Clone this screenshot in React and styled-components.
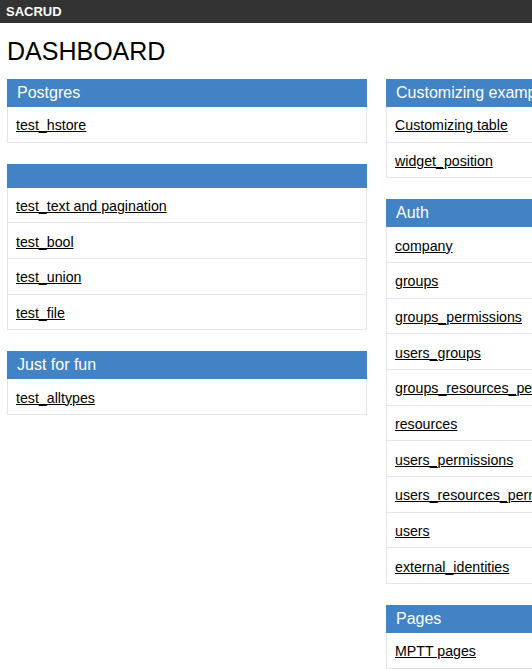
import styled, { createGlobalStyle } from 'styled-components';

const GlobalStyle = createGlobalStyle`
  html, body {
    margin: 0;
    padding: 0;
    overflow: hidden;
    background: #fff;
    font-family: "Liberation Sans", Arial, sans-serif;
  }
`;

const columns = [
  [
    { title: 'Postgres', items: ['test_hstore'] },
    { title: '', items: ['test_text and pagination', 'test_bool', 'test_union', 'test_file'] },
    { title: 'Just for fun', items: ['test_alltypes'] },
  ],
  [
    { title: 'Customizing examples', items: ['Customizing table', 'widget_position'] },
    {
      title: 'Auth',
      items: [
        'company',
        'groups',
        'groups_permissions',
        'users_groups',
        'groups_resources_permissions',
        'resources',
        'users_permissions',
        'users_resources_permissions',
        'users',
        'external_identities',
      ],
    },
    { title: 'Pages', items: ['MPTT pages'] },
  ],
];

function App() {
  return (
    <>
      <GlobalStyle />
      <TopBar>SACRUD</TopBar>
      <Main>
        <Title>DASHBOARD</Title>
        <Columns>
          {columns.map((col, i) => (
            <Column key={i}>
              {col.map((panel, j) => (
                <Panel key={j}>
                  <PanelHeader>{panel.title}</PanelHeader>
                  {panel.items.map((item) => (
                    <Row key={item}>
                      <Link href="#">{item}</Link>
                    </Row>
                  ))}
                </Panel>
              ))}
            </Column>
          ))}
        </Columns>
      </Main>
    </>
  );
}

const TopBar = styled.div`
  height: 23px;
  line-height: 23px;
  background: #333333;
  color: #fff;
  font-weight: bold;
  font-size: 13px;
  padding-left: 6px;
`;

const Main = styled.div`
  padding: 0 7px;
`;

const Title = styled.h1`
  margin: 14px 0 0;
  font-size: 25px;
  font-weight: normal;
  line-height: 28px;
  color: #000;
`;

const Columns = styled.div`
  display: flex;
  gap: 19px;
  margin-top: 14px;
  width: 739px;
`;

const Column = styled.div`
  width: 360px;
  flex: none;
  display: flex;
  flex-direction: column;
  gap: 21px;
`;

const Panel = styled.div`
  border: 1px solid #e6e6e6;
  border-top: none;
`;

const PanelHeader = styled.div`
  background: #4183c4;
  color: #fff;
  font-size: 16px;
  line-height: 18px;
  min-height: 14px;
  padding: 5px 10px;
  margin: 0 -1px;
  white-space: nowrap;
  overflow: hidden;
`;

const Row = styled.div`
  height: 32.67px;
  display: flex;
  align-items: center;
  padding: 2px 8px 0;
  font-size: 14.2px;
  white-space: nowrap;
  overflow: hidden;
  & + & {
    border-top: 1px solid #e6e6e6;
  }
`;

const Link = styled.a`
  color: #000;
  text-decoration: underline;
`;

export default App;
